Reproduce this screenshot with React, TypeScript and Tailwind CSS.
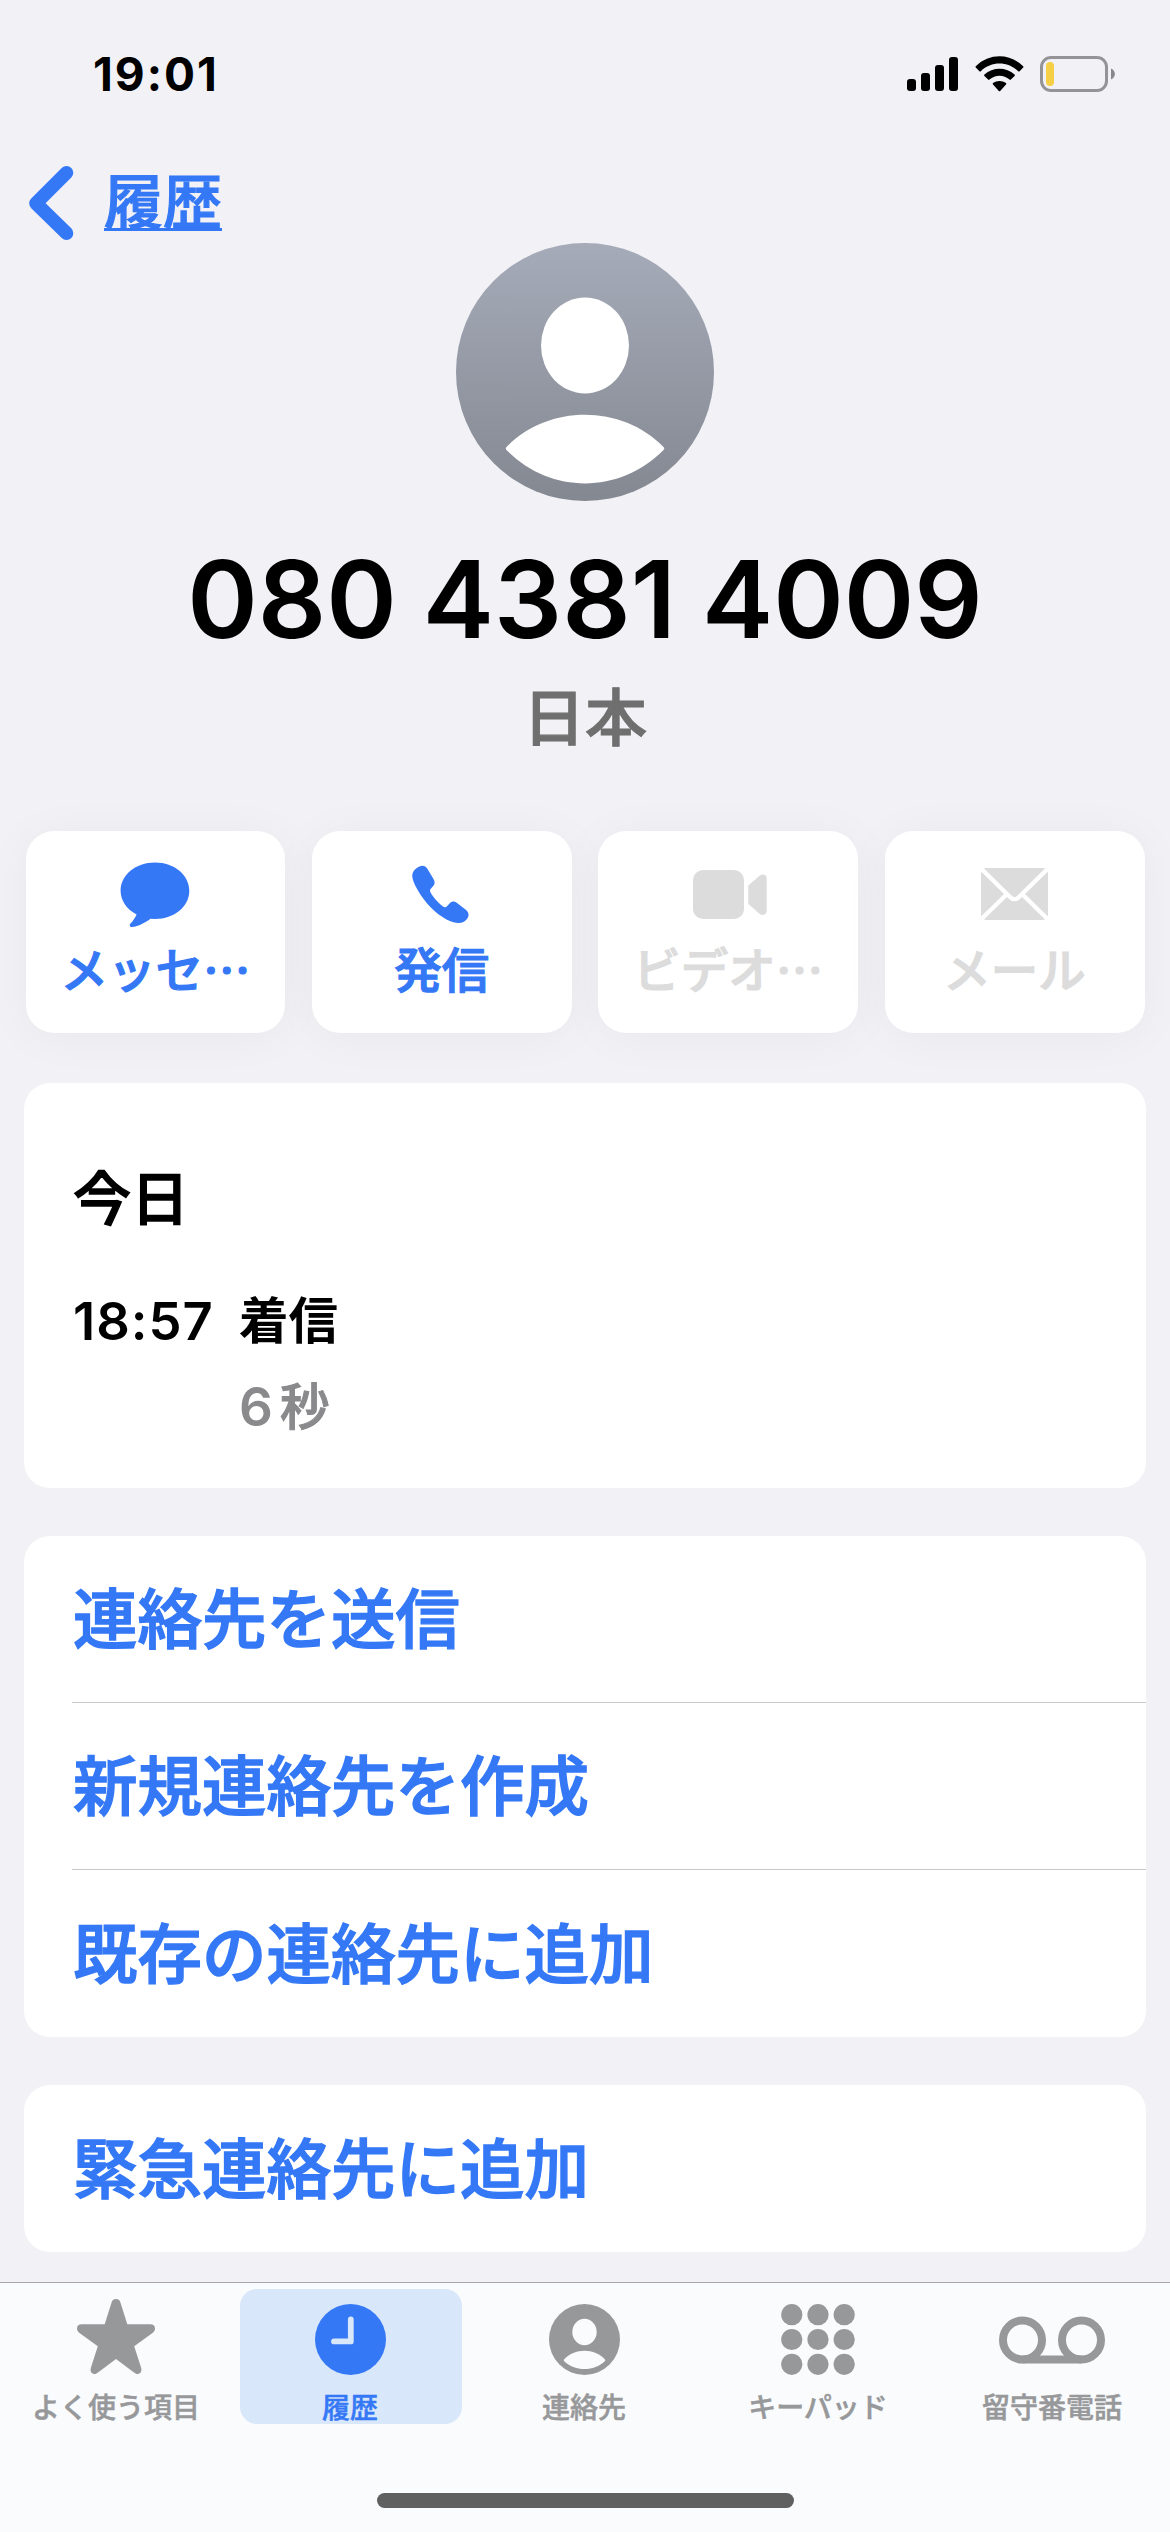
import type { ReactNode } from "react";

const StatusBar = () => {
  return (
    <div className="flex h-[148px] items-center justify-between pl-[93px] pr-[55px]">
      <span className="font-['Inter',sans-serif] text-[46px] font-bold leading-none tracking-[2px] text-black">19:01</span>
      <div className="flex items-center">
        <svg width="51" height="36" viewBox="0 0 51 36">
          <rect x="0" y="23" width="9" height="12" rx="3" />
          <rect x="14" y="17" width="9" height="18" rx="3" />
          <rect x="28" y="9" width="9" height="26" rx="3" />
          <rect x="42" y="1" width="9" height="34" rx="3" />
        </svg>
        <svg className="ml-[17px]" width="49" height="36" viewBox="0 0 49 36">
          <path d="M0.8 10.2C14 -3.1 35 -3.1 48.2 10.2Q48.8 10.9 48.2 11.6L44.6 15.2Q44 15.8 43.2 15.2C32.5 5 16.5 5 5.8 15.2Q5 15.8 4.4 15.2L0.8 11.6Q0.2 10.9 0.8 10.2Z" />
          <path d="M9.4 18.6C17.8 10.8 31.2 10.8 39.6 18.6Q40.2 19.3 39.6 20L35.9 23.6Q35.2 24.2 34.5 23.6C28.8 18.4 20.2 18.4 14.5 23.6Q13.8 24.2 13.1 23.6L9.4 20Q8.8 19.3 9.4 18.6Z" />
          <path d="M18 27.1C21.6 24.3 27.4 24.3 31 27.1Q31.7 27.8 31 28.5L25.2 34.9Q24.5 35.6 23.8 34.9L18 28.5Q17.3 27.8 18 27.1Z" />
        </svg>
        <svg className="ml-4" width="75" height="36" viewBox="0 0 75 36">
          <rect x="1.5" y="1.5" width="65" height="33" rx="9.5" fill="none" stroke="#949498" strokeWidth="3" />
          <rect x="6" y="6" width="8" height="24" rx="4" fill="#f5cf45" />
          <path d="M71 12.5C76.2 15 76.2 21 71 23.5Z" fill="#88888b" />
        </svg>
      </div>
    </div>
  );
};

const NavBar = () => {
  return (
    <div className="flex h-[95px] items-start pl-[29px]">
      <svg className="mt-[18px]" width="45" height="74" viewBox="0 0 45 74">
        <path d="M37.5 6.8L7 37.3L37.5 67.2" fill="none" stroke="#3478f6" strokeWidth="13.6" strokeLinecap="round" strokeLinejoin="round" />
      </svg>
      <a className="ml-[30px] mt-[21px] text-[59px] font-medium leading-[60px] text-[#3478f6] underline decoration-[3px] underline-offset-[4px] [-webkit-text-stroke:1.2px] [text-decoration-skip-ink:none]">
        履歴
      </a>
    </div>
  );
};

const Avatar = () => {
  return (
    <svg className="mx-auto shrink-0" width="258" height="258" viewBox="0 0 258 258">
      <defs>
        <linearGradient id="avatar" x1="0" y1="0" x2="0" y2="1">
          <stop offset="0" stopColor="#a6abb9" />
          <stop offset="1" stopColor="#838891" />
        </linearGradient>
      </defs>
      <circle cx="129" cy="129" r="129" fill="url(#avatar)" />
      <ellipse cx="129" cy="102.5" rx="44" ry="48" fill="#fff" />
      <path d="M50.5 204C92 161 166 161 207.5 204Q209 205.5 207.5 207C164 251.5 94 251.5 50.5 207Q49 205.5 50.5 204Z" fill="#fff" />
    </svg>
  );
};

const MessageIcon = () => (
  <svg width="70" height="66" viewBox="0 0 70 66" fill="currentColor">
    <path d="M35 1.5C54.5 1.5 69.3 14.2 69.3 29.8C69.3 45.5 54.5 58 35 58L30.5 57.8C25.5 61.5 18.5 65.6 12 66C9.6 66 9.2 64 10.5 62.5C13 59.8 15.5 56.5 16.6 53.5C6.5 48.2 0.6 39.5 0.6 29.8C0.6 14.2 15.5 1.5 35 1.5Z" />
  </svg>
);

const PhoneIcon = () => (
  <svg className="mr-[3px]" width="57" height="58" viewBox="0 0 57 58" fill="currentColor">
    <path d="M7.5 1.5C10.5 0 13.5 0.8 15.5 4L21.5 14C23.2 16.8 22.8 19 21 21.3L18.6 24C17.7 25.2 17.8 26 18.5 27.3C21.5 33 27 38.8 31.5 41.7C33 42.7 34 42.4 35 41.3L38 38C40 36 42.5 36 44.7 37.7L53.5 44.5C56.5 47 57.3 49.7 55.8 52.7C53 57.7 47.8 59 41.5 57.2C32 54.5 20.5 46 12 34.5C3.5 23 -0.5 13.5 0.4 9.5C1 5.5 4.5 2.7 7.5 1.5Z" />
  </svg>
);

const VideoIcon = () => (
  <svg className="ml-[3px]" width="74" height="49" viewBox="0 0 74 49" fill="currentColor">
    <rect width="51" height="49" rx="10" />
    <path d="M55.3 15.5L66.5 5.7Q68 4.5 70 4.5Q73.5 4.7 73.7 8.5V41Q73.5 44.5 70 45Q68 45 66.5 43.8L55.3 34Z" />
  </svg>
);

const MailIcon = () => (
  <svg width="67" height="52" viewBox="0 0 67 52">
    <rect width="67" height="52" rx="5" fill="currentColor" />
    <path d="M0 0.5L28.5 28.5Q33.5 34 38.5 28.5L67 0.5M0 51.5L25.5 26.5M67 51.5L41.5 26.5" fill="none" stroke="#fff" strokeWidth="4.2" />
  </svg>
);

const quickActions: { label: string; icon: ReactNode; enabled: boolean }[] = [
  { label: "メッセ…", icon: <MessageIcon />, enabled: true },
  { label: "発信", icon: <PhoneIcon />, enabled: true },
  { label: "ビデオ…", icon: <VideoIcon />, enabled: false },
  { label: "メール", icon: <MailIcon />, enabled: false },
];

const QuickActions = () => {
  return (
    <div className="mt-[86px] grid grid-cols-4 gap-[26.5px] px-[25.5px]">
      {quickActions.map((action) => (
        <div
          key={action.label}
          className={`flex h-[202px] flex-col items-center rounded-[28px] bg-white shadow-[0_4px_48px_rgba(0,0,0,0.045)] ${
            action.enabled ? "text-[#3478f6]" : "text-[#dcdcdc]"
          }`}
        >
          <div className="mt-[26px] flex h-[74px] items-center">{action.icon}</div>
          <span className="mt-[7px] whitespace-nowrap text-[47.5px] font-medium leading-[60px] [-webkit-text-stroke:1.2px]">{action.label}</span>
        </div>
      ))}
    </div>
  );
};

const RecentCalls = () => {
  return (
    <section className="mx-6 mt-[50px] h-[405px] rounded-[26px] bg-white pl-[49px] pt-[82px]">
      <h2 className="text-[58px] font-medium leading-[60px] text-black [-webkit-text-stroke:1.4px]">今日</h2>
      <div className="mt-[63px] grid grid-cols-[166px_1fr] items-start">
        <span className="mt-[3px] font-['Inter',sans-serif] text-[52.5px] font-semibold leading-[60px] tracking-[1px] text-black">18:57</span>
        <span className="text-[49.5px] font-bold leading-[60px] text-black">着信</span>
      </div>
      <div className="mt-[23px] flex items-start pl-[166px] text-[#8a8a8d]">
        <span className="mt-[3px] font-['Inter',sans-serif] text-[53px] font-semibold leading-[60px]">6</span>
        <span className="ml-[7px] text-[49.5px] font-medium leading-[60px] [-webkit-text-stroke:1px]">秒</span>
      </div>
    </section>
  );
};

const ActionList = ({ items }: { items: string[] }) => {
  return (
    <section className="mx-6 mt-12 rounded-[26px] bg-white pl-12">
      {items.map((item, i) => (
        <div key={item} className={`flex h-[167px] items-center pb-[7px] ${i < items.length - 1 ? "border-b border-[#c8c8ca]" : ""}`}>
          <span className="pl-px text-[64.5px] font-medium leading-none text-[#3478f6] [-webkit-text-stroke:1.4px]">{item}</span>
        </div>
      ))}
    </section>
  );
};

const StarIcon = () => (
  <svg className="mb-[6px]" width="78" height="75" viewBox="0 0 78 75" fill="currentColor">
    <path d="M39 0C41.5 0 43 1.5 43.6 4L50.3 25.2L73.5 25.2C76 25.2 78 26.5 78 29.5C78 31.5 77 32.8 75.5 34L57.2 47.2L64.2 69C65 72 63.5 75 60.5 75C59 75 58 74.3 57 73.5L39 60L21 73.5C20 74.3 19 75 17.5 75C14.5 75 13 72 13.8 69L20.8 47.2L2.5 34C1 32.8 0 31.5 0 29.5C0 26.5 2 25.2 4.5 25.2L27.7 25.2L34.4 4C35 1.5 36.5 0 39 0Z" />
  </svg>
);

const ClockIcon = () => (
  <svg width="71" height="71" viewBox="0 0 71 71">
    <circle cx="35.5" cy="35.5" r="35.5" fill="currentColor" />
    <path d="M35.8 15.5V37.4H19" fill="none" stroke="#d9e7fa" strokeWidth="5.8" strokeLinecap="round" strokeLinejoin="round" />
  </svg>
);

const ContactIcon = () => (
  <svg width="71" height="71" viewBox="0 0 71 71">
    <circle cx="35.5" cy="35.5" r="35.5" fill="currentColor" />
    <ellipse cx="35.5" cy="28" rx="12.2" ry="13.2" fill="#fafbfd" />
    <path d="M15 55.5C25 43.7 46 43.7 56 55.5Q56.5 56.3 56 57C45 67.7 26 67.7 15 57Q14.5 56.3 15 55.5Z" fill="#fafbfd" />
  </svg>
);

const KeypadIcon = () => (
  <svg width="74" height="71" viewBox="0 0 74 71" fill="currentColor">
    {[10.7, 35.5, 60.3].map((y) => [10.8, 37, 63.2].map((x) => <circle key={`${x}-${y}`} cx={x} cy={y} r="10.6" />))}
  </svg>
);

const VoicemailIcon = () => (
  <svg width="106" height="48" viewBox="0 0 106 48" fill="none" stroke="currentColor" strokeWidth="8">
    <circle cx="23.5" cy="24" r="19.5" />
    <circle cx="82.5" cy="24" r="19.5" />
    <path d="M23.5 43.5H82.5" />
  </svg>
);

const tabs: { label: string; icon: ReactNode; active?: boolean }[] = [
  { label: "よく使う項目", icon: <StarIcon /> },
  { label: "履歴", icon: <ClockIcon />, active: true },
  { label: "連絡先", icon: <ContactIcon /> },
  { label: "キーパッド", icon: <KeypadIcon /> },
  { label: "留守番電話", icon: <VoicemailIcon /> },
];

const TabBar = () => {
  return (
    <nav className="mt-[30px] flex h-[250px] flex-col border-t border-[#a8a8ab] bg-[#fafbfd] pt-[6px]">
      <div className="grid grid-cols-5">
        {tabs.map((tab) => (
          <div
            key={tab.label}
            className={`mx-[6px] flex h-[135px] flex-col items-center rounded-[17px] pr-[2px] ${
              tab.active ? "bg-[#d9e7fa] text-[#3478f6]" : "text-[#97989a]"
            }`}
          >
            <div className="mt-[9px] flex h-[83px] items-center">{tab.icon}</div>
            <span className="mt-[7px] whitespace-nowrap text-[28px] font-medium leading-[36px] [-webkit-text-stroke:0.5px]">{tab.label}</span>
          </div>
        ))}
      </div>
      <div className="mx-auto mt-[69px] h-[15px] w-[417px] rounded-full bg-[#606060]" />
    </nav>
  );
};

const App = () => {
  return (
    <main lang="ja" className="flex h-[2532px] w-[1170px] flex-col overflow-hidden bg-[#f1f1f6] font-['Noto_Sans_CJK_JP',sans-serif]">
      <StatusBar />
      <NavBar />
      <Avatar />
      <h1 className="mt-[41px] whitespace-nowrap text-center font-['Inter',sans-serif] text-[107px] font-semibold leading-[115px] text-black [word-spacing:-1px]">
        080 4381 4009
      </h1>
      <p className="mt-[27px] text-center text-[62px] font-medium leading-[61px] text-[#6f6f6f] [-webkit-text-stroke:1.2px]">日本</p>
      <QuickActions />
      <RecentCalls />
      <ActionList items={["連絡先を送信", "新規連絡先を作成", "既存の連絡先に追加"]} />
      <ActionList items={["緊急連絡先に追加"]} />
      <TabBar />
    </main>
  );
};

export default App;
